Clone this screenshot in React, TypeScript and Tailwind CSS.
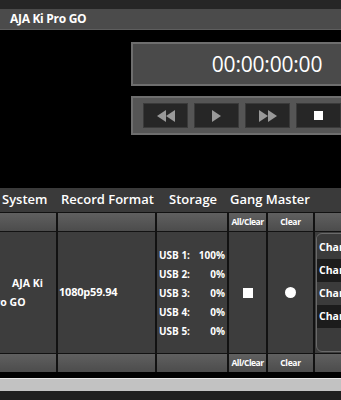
import React from 'react';

// Ki Pro GO – transport + media status panel

const font = { fontFamily: '"Open Sans", "Noto Sans", Arial, sans-serif' };

const TransportButton: React.FC<{ children: React.ReactNode }> = ({ children }) => (
  <div className="flex h-[25px] w-[45px] shrink-0 items-center justify-center bg-[#262626] border border-[#3a3a3a]">
    {children}
  </div>
);

const Tri: React.FC<{ dir: 'l' | 'r' }> = ({ dir }) => (
  <svg width="9" height="12" viewBox="0 0 9 12">
    {dir === 'l' ? (
      <polygon points="9,0 9,12 0,6" fill="#999999" />
    ) : (
      <polygon points="0,0 0,12 9,6" fill="#999999" />
    )}
  </svg>
);

const storage = [
  { label: 'USB 1:', value: '100%' },
  { label: 'USB 2:', value: '0%' },
  { label: 'USB 3:', value: '0%' },
  { label: 'USB 4:', value: '0%' },
  { label: 'USB 5:', value: '0%' },
];

const cols = 'grid grid-cols-[56px_97px_70px_37px_45px_60px] gap-x-[2px]';
const bar = 'bg-gradient-to-b from-[#606060] to-[#4c4c4c]';

const BarRow = () => (
  <div className={`${cols} h-[18px] mt-[1px]`}>
    <div className={bar} />
    <div className={bar} />
    <div className={bar} />
    <div className={`${bar} flex items-center justify-center text-[8.5px] font-bold tracking-[-0.5px]`}>All/Clear</div>
    <div className={`${bar} flex items-center justify-center text-[8.5px] font-bold tracking-[-0.3px]`}>Clear</div>
    <div className={bar} />
  </div>
);

export default function App() {
  return (
    <div className="w-[341px] h-[400px] overflow-hidden bg-black text-white" style={font}>
      {/* top strip */}
      <div className="h-[9px] bg-[#262626]" />

      {/* title */}
      <div className="h-[21px] bg-[#4b4b4b] border-b border-[#5e5e5e] flex items-center pl-[10px]">
        <span className="text-[12px] font-bold tracking-[-0.3px]">AJA Ki Pro GO</span>
      </div>

      {/* transport area */}
      <div className="h-[158px] pl-[131px] pt-[12px] overflow-hidden">
        <div className="w-[272px] h-[44px] border-2 border-[#6e6e6e] bg-[#4a4a4a] flex items-center justify-center">
          <span className="text-[21px] leading-none tracking-[-0.2px]">00:00:00:00</span>
        </div>
        <div className="mt-[10px] w-[272px] h-[39px] border-2 border-[#6e6e6e] bg-[#555555] flex items-center gap-[6px] pl-[10px]">
          <TransportButton>
            <div className="flex">
              <Tri dir="l" />
              <Tri dir="l" />
            </div>
          </TransportButton>
          <TransportButton>
            <Tri dir="r" />
          </TransportButton>
          <TransportButton>
            <div className="flex">
              <Tri dir="r" />
              <Tri dir="r" />
            </div>
          </TransportButton>
          <TransportButton>
            <div className="w-[9px] h-[9px] bg-white" />
          </TransportButton>
        </div>
      </div>

      {/* table */}
      <div className="bg-[#121212] w-[380px]">
        {/* headers */}
        <div className="h-[24px] bg-[#3a3a3a] text-[13px] font-semibold flex items-center relative">
          <span className="absolute left-[2px]">System</span>
          <span className="absolute left-[61px]">Record Format</span>
          <span className="absolute left-[169px]">Storage</span>
          <span className="absolute left-[230px]">Gang Master</span>
        </div>

        <BarRow />

        {/* body */}
        <div className={`${cols} h-[121px] mt-[1px]`}>
          <div className="bg-[#3d3d3d] flex flex-col justify-center text-[10.5px] font-bold leading-[19px] overflow-hidden">
            <span className="ml-[12px] whitespace-nowrap">AJA Ki</span>
            <span className="ml-[-11px] whitespace-nowrap">Pro GO</span>
          </div>
          <div className="bg-[#3d3d3d] flex items-center pl-[1px] text-[11px] font-bold tracking-[-0.2px]">1080p59.94</div>
          <div className="bg-[#3d3d3d] flex flex-col justify-center pl-[2px] pr-[2px] text-[10px] font-bold leading-[19px] pt-[1px]">
            {storage.map(s => (
              <div key={s.label} className="flex justify-between">
                <span>{s.label}</span>
                <span>{s.value}</span>
              </div>
            ))}
          </div>
          <div className="bg-[#3d3d3d] flex items-center justify-center">
            <div className="w-[10px] h-[10px] bg-white" />
          </div>
          <div className="bg-[#3d3d3d] flex items-center justify-center">
            <div className="w-[11px] h-[11px] rounded-full bg-white" />
          </div>
          <div className="bg-[#3d3d3d] pl-[1px] py-[1px]">
            <div className="h-full rounded-md border border-[#6a6a6a] bg-[#3b3b3b] pt-[2px] overflow-hidden">
              {['bg-[#3b3b3b]', 'bg-[#1c1c1c]', 'bg-[#3b3b3b]', 'bg-[#1c1c1c]'].map((bg, i) => (
                <div key={i} className={`${bg} h-[23px] flex items-center pl-[2px] text-[10.5px] font-bold whitespace-nowrap`}>
                  Channel {i + 1}
                </div>
              ))}
            </div>
          </div>
        </div>

        <BarRow />
      </div>

      {/* bottom scrollbar */}
      <div className="h-[6px] bg-black" />
      <div className="h-[13px] bg-[#c2c2c2] border-t border-[#e6e6e6]" />
      <div className="h-[10px] bg-[#1f1f1f]" />
    </div>
  );
}
